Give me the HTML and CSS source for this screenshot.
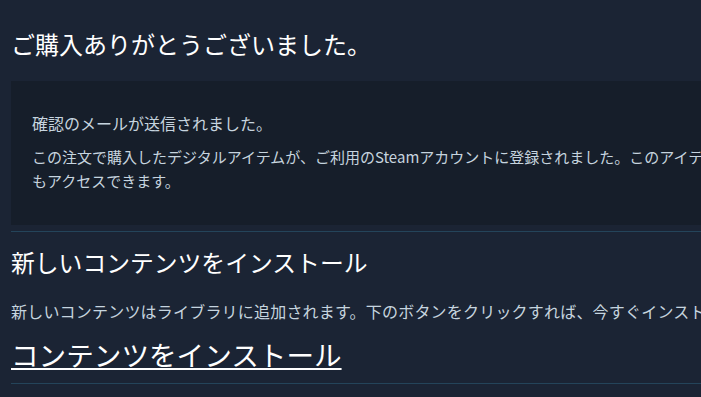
FILE: index.html
```html
<!DOCTYPE html>
<html>
  <head>
    <meta charset="utf-8">
    <title>ご購入ありがとうございました</title>
    <link rel="stylesheet" href="styles.css">
  </head>
  <body>
    <div class="page">
      <h1 class="page-title">ご購入ありがとうございました。</h1>
      <div class="receipt-box">
        <p class="receipt-line">確認のメールが送信されました。</p>
        <p class="receipt-text">この注文で購入したデジタルアイテムが、ご利用のSteamアカウントに登録されました。このアイテムは、Steamクライアントの「ライブラリ」からいつで<br>もアクセスできます。</p>
      </div>
      <div class="install-section">
        <h2 class="section-title">新しいコンテンツをインストール</h2>
        <p class="section-text">新しいコンテンツはライブラリに追加されます。下のボタンをクリックすれば、今すぐインストールを開始できます。</p>
        <a class="install-link" href="#">コンテンツをインストール</a>
      </div>
    </div>
  </body>
</html>
```

FILE: styles.css
```css
html,
body {
  overflow: hidden;
}
body {
  margin: 0;
  background-color: #1b2434;
  font-family: "Noto Sans CJK JP", "Noto Sans", sans-serif;
  color: #c6d4df;
}
.page {
  width: 1400px;
  padding-left: 11px;
}

.page-title {
  margin: 0;
  padding-top: 28px;
  font-size: 24px;
  font-weight: normal;
  line-height: 32px;
  color: #ffffff;
}

.receipt-box {
  margin-top: 21px;
  padding: 30px 21px 32px;
  background-color: #161e2a;
  line-height: 24px;
  white-space: nowrap;
}
.receipt-line {
  margin: 0;
  font-size: 16px;
}
.receipt-text {
  margin: 10px 0 0;
  font-size: 15px;
}

.install-section {
  margin-top: 6px;
  border-top: 1px solid #24445a;
  border-bottom: 1px solid #24445a;
  padding-bottom: 11px;
}
.section-title {
  margin: 14px 0 0;
  font-size: 23.8px;
  font-weight: normal;
  line-height: 32px;
  color: #ffffff;
}
.section-text {
  margin: 21px 0 0;
  font-size: 16px;
  letter-spacing: 0.2px;
  line-height: 24px;
  white-space: nowrap;
}
.install-link {
  display: inline-block;
  margin-top: 13px;
  font-size: 27.6px;
  line-height: 36px;
  color: #ffffff;
  text-decoration: underline;
}
```
